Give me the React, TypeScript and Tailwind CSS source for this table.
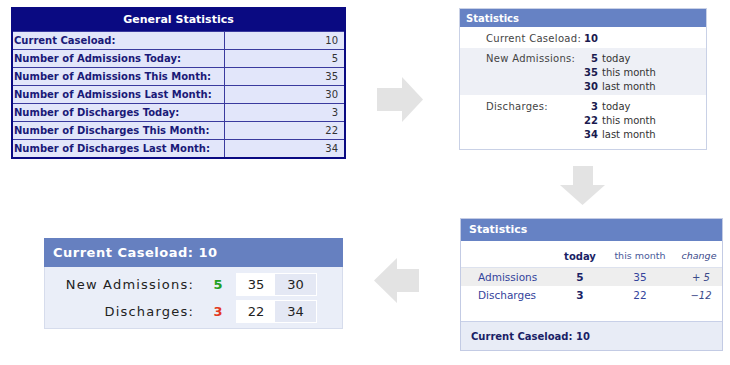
const arrowFill = "#e3e3e3";

const generalRows: [string, number][] = [
  ["Current Caseload:", 10],
  ["Number of Admissions Today:", 5],
  ["Number of Admissions This Month:", 35],
  ["Number of Admissions Last Month:", 30],
  ["Number of Discharges Today:", 3],
  ["Number of Discharges This Month:", 22],
  ["Number of Discharges Last Month:", 34],
];

function RightArrow() {
  return (
    <svg width="46" height="45" viewBox="0 0 46 45" className="ml-[31px] mt-[70px] shrink-0">
      <polygon points="0,11 25,11 25,0 46,22.5 25,45 25,34 0,34" fill={arrowFill} />
    </svg>
  );
}

function DownArrow() {
  return (
    <svg width="45" height="39" viewBox="0 0 45 39">
      <polygon points="13,0 33,0 33,19 45,19 22.5,39 0,19 13,19" fill={arrowFill} />
    </svg>
  );
}

function LeftArrow() {
  return (
    <svg width="45" height="45" viewBox="0 0 45 45" className="ml-[31px] mt-[53px] shrink-0">
      <polygon points="0,22.5 23,0 23,11 45,11 45,34 23,34 23,45" fill={arrowFill} />
    </svg>
  );
}

function GeneralStatistics() {
  return (
    <div className="w-[335px] shrink-0 border-2 border-[#0a0a82] bg-[#0a0a82]">
      <div className="flex h-[22px] items-center justify-center text-[11px] font-bold text-white">
        General Statistics
      </div>
      {generalRows.map(([label, value]) => (
        <div key={label} className="flex h-[18px] border-t border-[#3a3a9e]">
          <div className="flex w-[212px] items-center border-r border-[#3a3a9e] bg-[#e2e6fa] pl-[1px] text-[10px] font-bold text-[#1a1a78]">
            {label}
          </div>
          <div className="flex flex-1 items-center justify-end bg-[#e2e6fa] pr-[6px] text-[10px] text-[#333]">
            {value}
          </div>
        </div>
      ))}
    </div>
  );
}

function StatLine({ label, value, text }: { label?: string; value: number; text?: string }) {
  return (
    <div className="flex h-[14px] items-center">
      <div className="w-[97px] tracking-[0.3px] text-[#444]">{label}</div>
      <div className="w-[15px] text-right font-bold text-[#1a1a4e]">{value}</div>
      {text && <div className="ml-[4px] text-[#333]">{text}</div>}
    </div>
  );
}

function StatisticsList() {
  return (
    <div className="mt-[1px] w-[248px] shrink-0 border border-[#c9d1e6] bg-white text-[10px]">
      <div className="flex h-[18px] items-center bg-[#6682c4] pl-[6px] text-[10px] font-bold text-white">
        Statistics
      </div>
      <div className="pt-[4px] pb-[3px] pl-[26px]">
        <StatLine label="Current Caseload:" value={10} />
      </div>
      <div className="bg-[#eef0f6] pt-[3px] pb-[2px] pl-[26px]">
        <StatLine label="New Admissions:" value={5} text="today" />
        <StatLine value={35} text="this month" />
        <StatLine value={30} text="last month" />
      </div>
      <div className="pt-[4px] pb-[8px] pl-[26px]">
        <StatLine label="Discharges:" value={3} text="today" />
        <StatLine value={22} text="this month" />
        <StatLine value={34} text="last month" />
      </div>
    </div>
  );
}

function StatisticsTable() {
  const rows = [
    { label: "Admissions", today: 5, month: 35, change: "+ 5", bg: "bg-[#eeeeee]" },
    { label: "Discharges", today: 3, month: 22, change: "\u221212", bg: "bg-white" },
  ];
  return (
    <div className="ml-[41px] mt-[13px] w-[263px] shrink-0 border border-[#c3cbe4] bg-white">
      <div className="flex h-[22px] items-center bg-[#6682c4] pl-[8px] text-[11px] font-bold text-white">
        Statistics
      </div>
      <div className="flex h-[27px] items-center border-b border-[#dde2ee] pt-[4px] text-[9.5px]">
        <div className="w-[95px]" />
        <div className="w-[48px] text-center text-[10px] font-bold text-[#1a1f66]">today</div>
        <div className="w-[72px] text-center text-[#4a5a9a]">this month</div>
        <div className="w-[46px] text-center italic text-[#3a4a8a]">change</div>
      </div>
      {rows.map((row) => (
        <div key={row.label} className={`flex h-[18px] items-center pt-[1px] text-[10.5px] ${row.bg}`}>
          <div className="w-[95px] pl-[17px] text-[#34449c]">{row.label}</div>
          <div className="w-[48px] text-center font-bold text-[#1a1f66]">{row.today}</div>
          <div className="w-[72px] text-center text-[#34449c]">{row.month}</div>
          <div className="w-[46px] pl-[4px] text-center text-[10px] italic text-[#3a4a8a]">{row.change}</div>
        </div>
      ))}
      <div className="h-[17px]" />
      <div className="flex h-[29px] items-center border-t border-[#c8d0e8] bg-[#e8ecf6] pl-[10px] text-[10px] font-bold text-[#1a1f66]">
        Current Caseload: 10
      </div>
    </div>
  );
}

function CountRow({ label, today, color, month, last }: { label: string; today: number; color: string; month: number; last: number }) {
  return (
    <div className="flex h-[23px] items-center">
      <div className="w-[149px] text-right text-[13px] tracking-[1.2px] text-[#222]">{label}</div>
      <div className={`w-[42px] pl-[6px] text-center text-[13px] font-bold ${color}`}>{today}</div>
      <div className="flex h-[23px] w-[81px] bg-white p-[1px]">
        <div className="flex w-[38px] items-center justify-center text-[13px] text-[#222]">{month}</div>
        <div className="flex flex-1 items-center justify-center bg-[#e4e8f4] text-[13px] text-[#222]">{last}</div>
      </div>
    </div>
  );
}

function CaseloadSummary() {
  return (
    <div className="mt-[33px] w-[299px] shrink-0">
      <div className="flex h-[29px] items-center bg-[#6680c0] pl-[9px] text-[13px] font-bold tracking-[0.5px] text-white">
        Current Caseload: 10
      </div>
      <div className="flex flex-col gap-[4px] border border-t-0 border-[#d6dcec] bg-[#eaeef8] pt-[6px] pb-[5px]">
        <CountRow label="New Admissions:" today={5} color="text-[#22a022]" month={35} last={30} />
        <CountRow label="Discharges:" today={3} color="text-[#e33a22]" month={22} last={34} />
      </div>
    </div>
  );
}

export default function App() {
  return (
    <div className="h-[365px] w-[730px] overflow-hidden bg-white font-['DejaVu_Sans','Verdana',sans-serif]">
      <div className="flex items-start pt-[7px] pl-[11px]">
        <GeneralStatistics />
        <RightArrow />
        <div className="ml-[36px]">
          <StatisticsList />
        </div>
      </div>
      <div className="mt-[7px] pl-[560px]">
        <DownArrow />
      </div>
      <div className="flex items-start pl-[44px]">
        <CaseloadSummary />
        <LeftArrow />
        <StatisticsTable />
      </div>
    </div>
  );
}
